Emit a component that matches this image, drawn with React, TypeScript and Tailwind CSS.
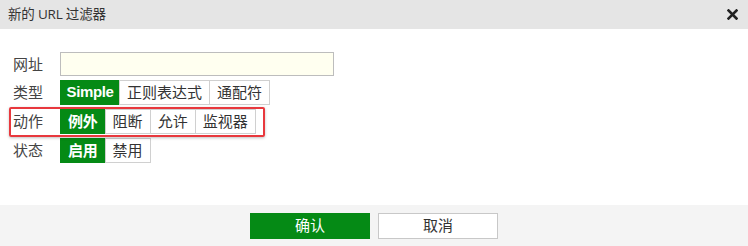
const font = { fontFamily: '"Open Sans", "Noto Sans CJK SC", sans-serif' };

function Seg({ items, active }: { items: string[]; active: number }) {
  return (
    <div className="flex">
      {items.map((t, i) => (
        <div
          key={t}
          className={
            i === active
              ? t === "Simple"
                ? "h-[25px] w-[60px] justify-center flex items-center border border-[#058a15] bg-[#058a15] text-white font-bold text-[15px] tracking-[-0.4px] font-['Liberation_Sans']"
                : "h-[25px] px-[7px] flex items-center border border-[#058a15] bg-[#058a15] text-white font-bold text-[15px] tracking-[-0.2px]"
              : "h-[25px] px-[7px] flex items-center border border-[#d0d0d0] -ml-px bg-white text-[#333] text-[15px]"
          }
        >
          {t}
        </div>
      ))}
    </div>
  );
}

function Row({ label, children }: { label: string; children: React.ReactNode }) {
  return (
    <div className="flex items-center">
      <div className="w-[60px] pl-[13px] text-[15px] text-[#444]">{label}</div>
      {children}
    </div>
  );
}

export default function App() {
  return (
    <div className="w-[748px] h-[246px] bg-white flex flex-col" style={font}>
      <div className="h-[29px] bg-[#e5e5e5] flex items-center justify-between pl-[8px] pr-[10px]">
        <span className="text-[13.5px] text-[#333] tracking-[-0.2px]">新的 URL 过滤器</span>
        <svg width="11" height="11" viewBox="0 0 11 11">
          <path d="M1.5 1.5 L9.5 9.5 M9.5 1.5 L1.5 9.5" stroke="#222" strokeWidth="2.6" strokeLinecap="square" />
        </svg>
      </div>
      <div className="flex-1 flex flex-col pt-[23px] gap-[4px]">
        <Row label="网址">
          <div className="w-[274px] h-[24px] border border-[#bdbdbd] bg-[#fffff0]" />
        </Row>
        <Row label="类型">
          <Seg items={["Simple", "正则表达式", "通配符"]} active={0} />
        </Row>
        <div className="relative">
          <Row label="动作">
            <Seg items={["例外", "阻断", "允许", "监视器"]} active={0} />
          </Row>
          <div className="absolute left-[9px] top-[-2px] w-[256px] h-[30px] border-2 border-[#e8383d] rounded-[2px] shadow-[0_1px_3px_rgba(0,0,0,0.25)] pointer-events-none" />
        </div>
        <Row label="状态">
          <Seg items={["启用", "禁用"]} active={0} />
        </Row>
      </div>
      <div className="h-[41px] bg-[#f4f4f4] flex items-center justify-center gap-[8px]">
        <button className="w-[120px] h-[26px] bg-[#058a15] border border-[#058a15] text-white text-[15px]">
          确认
        </button>
        <button className="w-[120px] h-[26px] bg-white border border-[#c8c8c8] text-[#333] text-[15px]">
          取消
        </button>
      </div>
    </div>
  );
}
